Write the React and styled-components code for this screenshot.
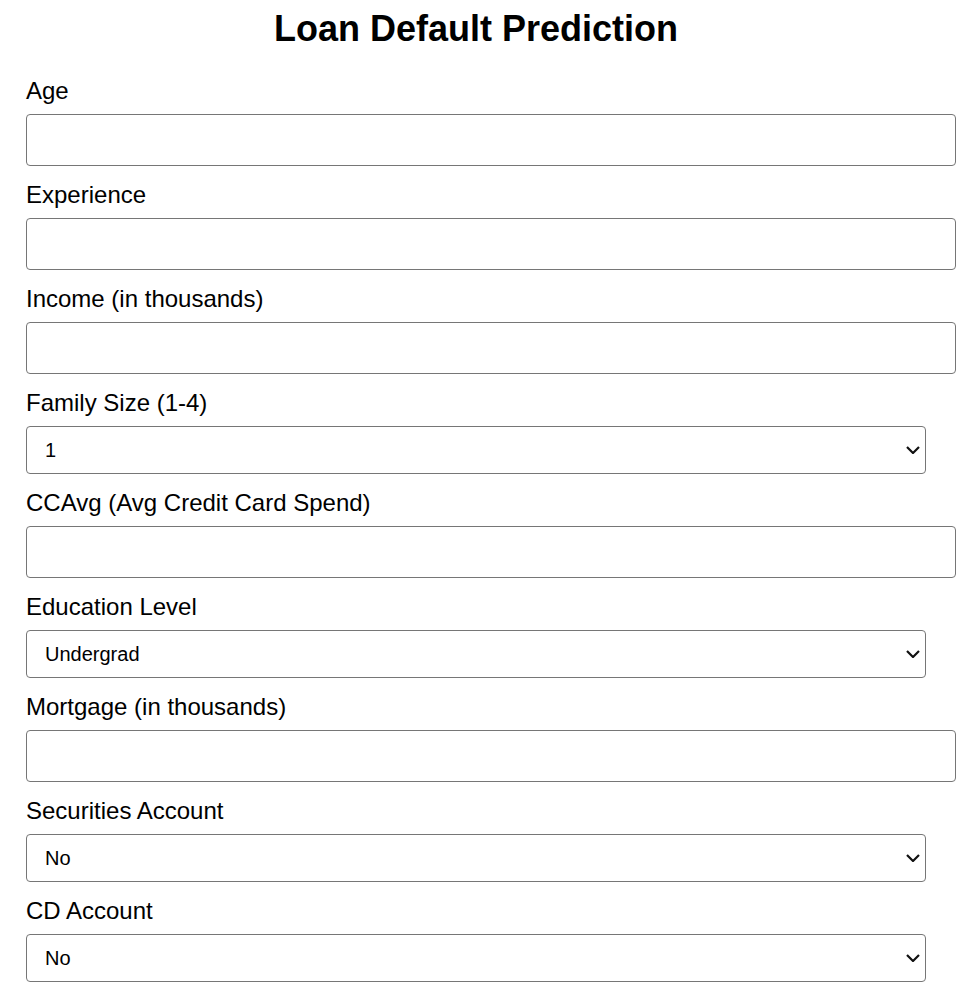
import React from 'react';
import styled, { createGlobalStyle } from 'styled-components';

const GlobalStyle = createGlobalStyle`
  body {
    margin: 0;
    background: #ffffff;
    font-family: "Liberation Sans", Arial, sans-serif;
    color: #000000;
  }
`;

const CONTAINER = styled.div`
  width: 900px;
  padding: 0 26px;
`;

const TITLE = styled.h1`
  margin: 8px 0 27px;
  text-align: center;
  font-size: 36px;
  font-weight: 700;
`;

const FORM = styled.form`
  display: flex;
  flex-direction: column;
`;

const GROUP = styled.div`
  display: flex;
  flex-direction: column;
  margin-bottom: 15px;
`;

const LABEL = styled.label`
  font-size: 24px;
  margin-bottom: 9px;
`;

const INPUT = styled.input`
  width: 100%;
  height: 50px;
  padding: 0 14px;
  border: 1px solid #767676;
  border-radius: 4px;
  font-size: 20px;
  font-family: "Liberation Sans", Arial, sans-serif;
  background: #ffffff;
`;

const SELECT_WRAP = styled.div`
  position: relative;
  width: 100%;
`;

const SELECT = styled.select`
  appearance: none;
  display: block;
  width: 100%;
  height: 48px;
  box-sizing: border-box;
  padding: 0 30px 0 18px;
  border: 1px solid #767676;
  border-radius: 4px;
  font-size: 20px;
  font-family: "Liberation Sans", Arial, sans-serif;
  background: #ffffff;
  color: #000000;
`;

const CHEVRON = styled.svg`
  position: absolute;
  right: 6px;
  top: 50%;
  margin-top: -4px;
  width: 14px;
  height: 8px;
  pointer-events: none;
`;

const fields = [
  { label: 'Age', name: 'age' },
  { label: 'Experience', name: 'experience' },
  { label: 'Income (in thousands)', name: 'income' },
  { label: 'Family Size (1-4)', name: 'family', options: ['1', '2', '3', '4'] },
  { label: 'CCAvg (Avg Credit Card Spend)', name: 'ccavg' },
  { label: 'Education Level', name: 'education', options: ['Undergrad', 'Graduate', 'Advanced/Professional'] },
  { label: 'Mortgage (in thousands)', name: 'mortgage' },
  { label: 'Securities Account', name: 'securities', options: ['No', 'Yes'] },
  { label: 'CD Account', name: 'cd', options: ['No', 'Yes'] },
  { label: 'Online Banking', name: 'online', options: ['No', 'Yes'] },
  { label: 'Credit Card', name: 'creditcard', options: ['No', 'Yes'] },
];

const App = () => {
  return (
    <React.Fragment>
      <GlobalStyle />
      <CONTAINER>
        <TITLE>Loan Default Prediction</TITLE>
        <FORM>
          {fields.map((f) => (
            <GROUP key={f.name}>
              <LABEL htmlFor={f.name}>{f.label}</LABEL>
              {f.options ? (
                <SELECT_WRAP>
                  <SELECT id={f.name} name={f.name}>
                    {f.options.map((o) => (
                      <option key={o}>{o}</option>
                    ))}
                  </SELECT>
                  <CHEVRON viewBox="0 0 14 8">
                    <polyline points="1,1 7,7 13,1" fill="none" stroke="#111" strokeWidth="2.2" />
                  </CHEVRON>
                </SELECT_WRAP>
              ) : (
                <INPUT id={f.name} name={f.name} type="number" />
              )}
            </GROUP>
          ))}
        </FORM>
      </CONTAINER>
    </React.Fragment>
  );
};

export default App;
